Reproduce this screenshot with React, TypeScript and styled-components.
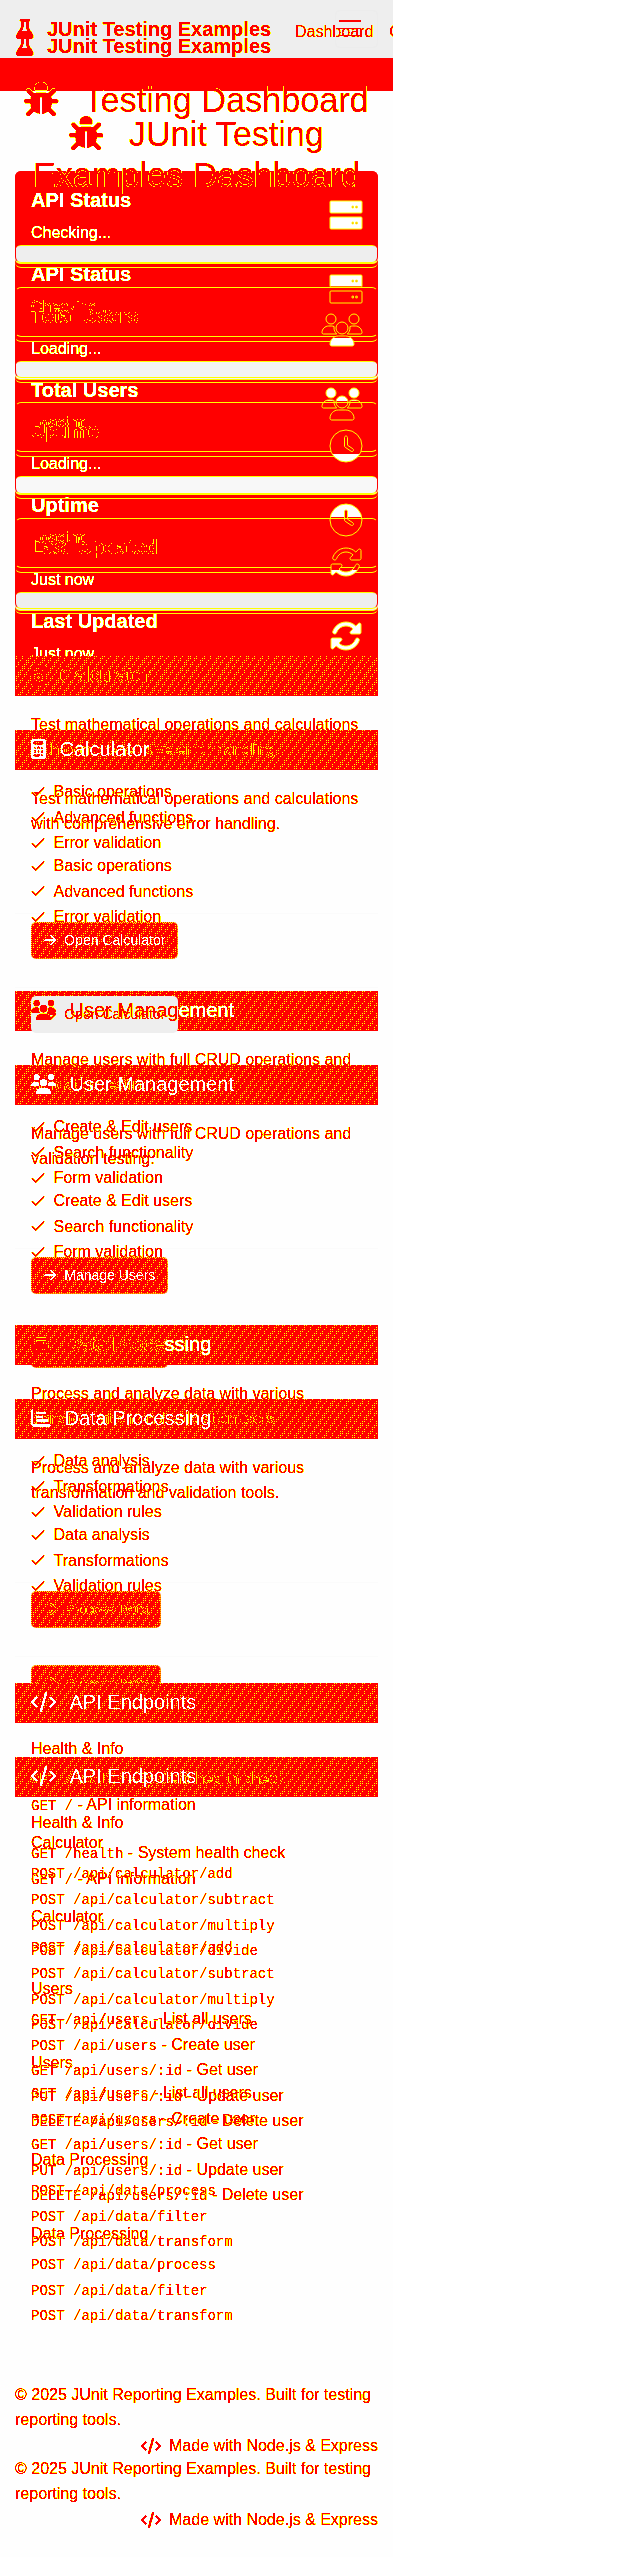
import React from 'react';
import styled, { createGlobalStyle, css } from 'styled-components';
import {
  FaArrowRight, FaBug, FaCalculator, FaChartBar, FaClock, FaCode,
  FaFlask, FaRotate, FaUsers,
} from 'react-icons/fa6';

type Tone = 'red' | 'white' | 'thin' | 'ghost';
type Side = 'before' | 'after';

const GlobalStyle = createGlobalStyle`
  * { box-sizing: border-box; }
  body { margin: 0; background: #fff; font-family: "Liberation Sans", Arial, sans-serif; font-size: 16px; line-height: 25.6px; }
  h1, h2, h3, h4, p, ul { margin: 0; padding: 0; font-weight: 400; }
  ul { list-style: none; }
  svg[viewBox] { width: 1em; height: 1em; flex: none; }
  svg[viewBox^="0 0 640"] { width: 1.25em; }
  svg[viewBox^="0 0 448"] { width: 0.875em; }
  svg[viewBox^="0 0 384"] { width: 0.75em; }
  svg[viewBox^="0 0 14"] { width: 14px; }
`;

const ink = css<{ $tone?: Tone }>`
  color: ${p => (p.$tone === 'white' || p.$tone === 'thin' ? '#fff' : '#f00')};
  filter: url(${p => (p.$tone === 'white' ? '#fringe-white' : p.$tone === 'thin' ? '#thin-white' : '#fringe-red')});
`;

const hatch = css`
  background:
    repeating-linear-gradient(124deg, transparent 0 3px, #f00 3px 6px, transparent 6px 8px, #f00 8px 12px),
    conic-gradient(#ff0 25%, #f00 0) 0 0 / 2px 2px;
`;

const Canvas = styled.div`
  width: 393px;
  height: 2557px;
  overflow: hidden;
  display: grid;
  background: #fefefe;
`;

const Layer = styled.div`
  grid-area: 1 / 1;
  min-width: 0;
`;

const Nav = styled.nav<{ $side: Side }>`
  position: relative;
  display: flex;
  align-items: center;
  height: ${p => (p.$side === 'before' ? 58 : 91)}px;
  padding-left: 16px;
  background: ${p => (p.$side === 'before' ? '#eee' : '#f00')};
`;

const Brand = styled.div`
  ${ink}
  position: relative;
  z-index: 1;
  display: flex;
  align-items: center;
  gap: 13.5px;
  width: 279px;
  flex: none;
  font-size: 20px;
  font-weight: 700;
  line-height: 30px;
  white-space: nowrap;
`;

const NavLinks = styled.div`
  ${ink}
  display: flex;
  gap: 16px;
  padding-top: 6px;
`;

const Toggler = styled.div`
  position: absolute;
  left: 335px;
  top: 10px;
  width: 43px;
  height: 38px;
  border: 1px solid #ececec;
  border-radius: 5px;
  padding: 9px 3px;
  display: flex;
  flex-direction: column;
  gap: 6px;
`;

const TogglerLine = styled.span<{ $dim?: boolean }>`
  width: 22px;
  height: ${p => (p.$dim ? 1 : 2)}px;
  background: #f00;
`;

const Title = styled.h1<{ $side: Side }>`
  ${ink}
  z-index: 1;
  position: relative;
  height: ${p => (p.$side === 'before' ? 113 : 154)}px;
  padding: ${p => (p.$side === 'before' ? 22 : 23)}px 15px 0;
  font-size: 34.2px;
  line-height: 41px;
  text-align: center;
  filter: url(#fringe-wide);
  svg { vertical-align: -4px; margin-right: 16px; }
`;

const Stats = styled.section<{ $side: Side }>`
  margin: 0 15px 46.5px;
  ${p => p.$side === 'after' && css`
    margin-top: -74px;
    padding-top: 74px;
    background: #f00;
    border-radius: 6px;
  `}
`;

const Stat = styled.article<{ $first: boolean; $last: boolean; $side: Side; $band: string }>`
  position: relative;
  display: flex;
  justify-content: space-between;
  align-items: center;
  height: 91.6px;
  margin-bottom: ${p => (p.$last ? 0 : 24)}px;
  padding: 0 15px;
  border: 1px solid #f00;
  border-top-color: ${p => (p.$first && p.$side === 'before' ? '#f00' : '#ff0')};
  border-bottom-color: #ff0;
  border-radius: 6px;
  &::after {
    content: '';
    position: absolute;
    inset: auto -1px -6px;
    height: 9px;
    border-bottom: 1px solid #ff0;
    border-radius: 0 0 6px 6px;
  }
  ${p => p.$side === 'after' && css`
    &::before {
      content: '';
      position: absolute;
      inset: 0 -1px auto;
      height: 17px;
      background: ${p.$band};
      border-radius: 5px;
      box-shadow: 0 1px #ff0;
    }
  `}
`;

const StatTitle = styled.h2<{ $tone: Tone }>`
  ${ink}
  font-size: 20px;
  font-weight: 700;
  line-height: 24px;
  margin-bottom: 8px;
`;

const StatText = styled.p<{ $tone: Tone }>`
  ${ink}
`;

const StatIcon = styled.span<{ $paint: string }>`
  position: relative;
  top: -2px;
  font-size: 32px;
  line-height: 0;
  svg { overflow: visible; }
  path { fill: ${p => p.$paint}; stroke: #ff0; stroke-width: 16px; }
`;

const Card = styled.article<{ $gap: number }>`
  margin: 0 15px ${p => p.$gap}px;
  border-radius: 6px;
`;

const CardHead = styled.div`
  ${hatch}
  position: relative;
  height: 40px;
  padding: 7px 16px;
`;

const HeadTitle = styled.h3<{ $tone: Tone }>`
  ${ink}
  position: relative;
  z-index: 2;
  display: flex;
  align-items: center;
  font-size: 20px;
  line-height: 24px;
  white-space: nowrap;
  svg { margin-right: 13.5px; }
`;

const Bright = styled.span`
  color: #fff;
`;

const FeatureBody = styled.div`
  height: 217px;
  padding: 16px 16px 0;
`;

const Copy = styled.p`
  ${ink}
  margin-bottom: 16px;
`;

const Item = styled.li`
  ${ink}
  display: flex;
  align-items: center;
  gap: 8.5px;
  height: 25.6px;
  white-space: nowrap;
`;

const CardFoot = styled.div`
  height: 53px;
  padding: 8px 16px;
  border-top: 1px solid #fbfbfb;
`;

const Button = styled.button<{ $lifted?: boolean }>`
  ${hatch}
  position: relative;
  display: inline-flex;
  height: 37px;
  padding: 0 12px;
  border: 1px dotted #ff0;
  border-radius: 5px;
  font: 14px "Liberation Sans", Arial, sans-serif;
  ${p => p.$lifted && css`
    z-index: 1;
    background: #eee;
    border-color: #eee;
  `}
`;

const ButtonLabel = styled.span<{ $tone: Tone }>`
  ${ink}
  display: flex;
  align-items: center;
  gap: 8px;
  height: 35px;
`;

const ApiBody = styled.div`
  height: 562px;
  padding: 16px 16px 0;
`;

const ApiGroup = styled.section`
  ${ink}
  margin-bottom: 16px;
  white-space: nowrap;
  h4 { line-height: 19.2px; margin-bottom: 8px; }
  li { height: 25.6px; }
  code { font: 14px "Liberation Mono", monospace; }
`;

const Footer = styled.footer`
  ${ink}
  padding: 97px 15px 0;
  height: 198px;
`;

const Credit = styled.p`
  display: flex;
  align-items: center;
  justify-content: flex-end;
  gap: 8px;
`;

const yellow = '0 0 0 0 1  0 0 0 0 1  0 0 0 0 0  0 0 0 1 0';

function Fringe({ id, edge, core }: { id: string; edge: string; core: string }) {
  return (
    <filter id={id} x="-5%" y="-10%" width="110%" height="120%" colorInterpolationFilters="sRGB">
      <feColorMatrix in="SourceGraphic" values={yellow} />
      <feComponentTransfer result="edge"><feFuncA type="discrete" tableValues={edge} /></feComponentTransfer>
      <feComponentTransfer in="SourceGraphic" result="core"><feFuncA type="discrete" tableValues={core} /></feComponentTransfer>
      <feMerge><feMergeNode in="edge" /><feMergeNode in="core" /></feMerge>
    </filter>
  );
}

const Filters = () => (
  <svg width="0" height="0" style={{ position: 'absolute' }}>
    <defs>
      <Fringe id="fringe-red" edge="0 1 1 1 1 1 1 1 1 1" core="0 0 0 0 1 1 1 1 1" />
      <Fringe id="fringe-wide" edge="0 1 1 1 1 1 1 1 1 1 1 1 1 1 1 1 1 1 1 1" core="0 0 0 0 0 1 1 1 1" />
      <Fringe id="fringe-white" edge="0 1 1 1 1 1 1 1" core="0 0 0 1 1" />
      <Fringe id="thin-white" edge="0 0" core="0 0 0 0 1 1 1" />
      <linearGradient id="low-white" x1="0" y1="0" x2="0" y2="512" gradientUnits="userSpaceOnUse">
        <stop offset="0.75" stopColor="#f00" /><stop offset="0.75" stopColor="#fff" />
      </linearGradient>
      <linearGradient id="high-white" x1="0" y1="0" x2="0" y2="512" gradientUnits="userSpaceOnUse">
        <stop offset="0.42" stopColor="#fff" /><stop offset="0.42" stopColor="#f00" />
      </linearGradient>
    </defs>
  </svg>
);

const Check = () => (
  <svg viewBox="0 0 14 16">
    <path d="M1 8.5 4.7 12 13 3.5" fill="none" stroke="currentColor" strokeWidth="1.3" />
  </svg>
);

const Server = () => (
  <svg viewBox="0 0 512 512">
    <path
      fillRule="evenodd"
      d="M16 32H496a16 16 0 0 1 16 16V208a16 16 0 0 1-16 16H16a16 16 0 0 1-16-16V48a16 16 0 0 1 16-16ZM352 114h24v28h-24ZM412 114h24v28h-24ZM16 288H496a16 16 0 0 1 16 16V464a16 16 0 0 1-16 16H16a16 16 0 0 1-16-16V304a16 16 0 0 1 16-16ZM352 370h24v28h-24ZM412 370h24v28h-24Z"
    />
  </svg>
);

const stats = [
  { title: 'API Status', text: 'Checking...', Icon: Server, band: '#eee' },
  { title: 'Total Users', text: 'Loading...', Icon: FaUsers, band: '#f3f3f3' },
  { title: 'Uptime', text: 'Loading...', Icon: FaClock, band: '#f8f8f8' },
  { title: 'Last Updated', text: 'Just now', Icon: FaRotate, band: '#eee' },
];

const features = [
  {
    title: ['Calculator', ''], Icon: FaCalculator, button: 'Open Calculator', gap: 25,
    copy: 'Test mathematical operations and calculations with comprehensive error handling.',
    items: ['Basic operations', 'Advanced functions', 'Error validation'],
  },
  {
    title: ['User Manag', 'ement'], Icon: FaUsers, button: 'Manage Users', gap: 24,
    copy: 'Manage users with full CRUD operations and validation testing.',
    items: ['Create & Edit users', 'Search functionality', 'Form validation'],
  },
  {
    title: ['Data Proce', 'ssing'], Icon: FaChartBar, button: 'Process Data', gap: 48,
    copy: 'Process and analyze data with various transformation and validation tools.',
    items: ['Data analysis', 'Transformations', 'Validation rules'],
  },
];

const endpoints: { name: string; rows: [string, string?][] }[] = [
  { name: 'Health & Info', rows: [['GET /health', 'System health check'], ['GET /', 'API information']] },
  {
    name: 'Calculator',
    rows: [['POST /api/calculator/add'], ['POST /api/calculator/subtract'], ['POST /api/calculator/multiply'], ['POST /api/calculator/divide']],
  },
  {
    name: 'Users',
    rows: [
      ['GET /api/users', 'List all users'], ['POST /api/users', 'Create user'], ['GET /api/users/:id', 'Get user'],
      ['PUT /api/users/:id', 'Update user'], ['DELETE /api/users/:id', 'Delete user'],
    ],
  },
  { name: 'Data Processing', rows: [['POST /api/data/process'], ['POST /api/data/filter'], ['POST /api/data/transform']] },
];

function Dashboard({ side }: { side: Side }) {
  const before = side === 'before';
  return (
    <Layer>
      <Nav $side={side}>
        <Brand><FaFlask />JUnit Testing Examples</Brand>
        {before && <NavLinks><span>Dashboard</span><span>Calculator</span></NavLinks>}
        {before && <Toggler><TogglerLine /><TogglerLine $dim /><TogglerLine $dim /></Toggler>}
      </Nav>
      <Title $side={side}>
        <FaBug /> {before ? 'Testing Dashboard' : 'JUnit Testing Examples Dashboard'}
      </Title>
      <Stats $side={side}>
        {stats.map(({ title, text, Icon, band }, i) => {
          const first = i === 0;
          const last = i === stats.length - 1;
          const solid = before ? first : last;
          const paint = solid ? '#fff' : `url(#${before ? 'low' : 'high'}-white)`;
          return (
            <Stat key={title} $side={side} $first={first} $last={last} $band={band}>
              <div>
                <StatTitle $tone={before && !first ? 'ghost' : 'white'}>{title}</StatTitle>
                <StatText $tone={!before && !last ? 'ghost' : 'white'}>{text}</StatText>
              </div>
              <StatIcon $paint={paint}><Icon /></StatIcon>
            </Stat>
          );
        })}
      </Stats>
      {features.map(({ title, Icon, button, copy, items, gap }, i) => (
        <Card key={button} $gap={gap}>
          <CardHead>
            <HeadTitle $tone={before ? 'ghost' : 'thin'}>
              <Icon />{title[0]}{before ? <Bright>{title[1]}</Bright> : title[1]}
            </HeadTitle>
          </CardHead>
          <FeatureBody>
            <Copy>{copy}</Copy>
            <ul>{items.map(t => <Item key={t}><Check />{t}</Item>)}</ul>
          </FeatureBody>
          <CardFoot>
            <Button $lifted={!before && i === 0}>
              <ButtonLabel $tone={before && i < 2 ? 'thin' : 'ghost'}><FaArrowRight />{button}</ButtonLabel>
            </Button>
          </CardFoot>
        </Card>
      ))}
      <Card $gap={0}>
        <CardHead><HeadTitle $tone="thin"><FaCode />API Endpoints</HeadTitle></CardHead>
        <ApiBody>
          {endpoints.map(g => (
            <ApiGroup key={g.name}>
              <h4>{g.name}</h4>
              <ul>{g.rows.map(([path, note]) => <li key={path}><code>{path}</code>{note ? ` - ${note}` : ''}</li>)}</ul>
            </ApiGroup>
          ))}
        </ApiBody>
      </Card>
      <Footer>
        <p>© 2025 JUnit Reporting Examples. Built for testing reporting tools.</p>
        <Credit><FaCode />Made with Node.js &amp; Express</Credit>
      </Footer>
    </Layer>
  );
}

export default function App() {
  return (
    <>
      <GlobalStyle />
      <Filters />
      <Canvas>
        <Dashboard side="after" />
        <Dashboard side="before" />
      </Canvas>
    </>
  );
}
